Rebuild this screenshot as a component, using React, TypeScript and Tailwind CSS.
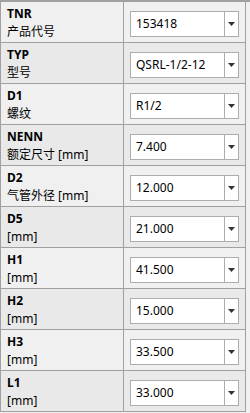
import React from "react";

const rows: { code: string; name: string; value: string }[] = [
  { code: "TNR", name: "产品代号", value: "153418" },
  { code: "TYP", name: "型号", value: "QSRL-1/2-12" },
  { code: "D1", name: "螺纹", value: "R1/2" },
  { code: "NENN", name: "额定尺寸 [mm]", value: "7.400" },
  { code: "D2", name: "气管外径 [mm]", value: "12.000" },
  { code: "D5", name: "[mm]", value: "21.000" },
  { code: "H1", name: "[mm]", value: "41.500" },
  { code: "H2", name: "[mm]", value: "15.000" },
  { code: "H3", name: "[mm]", value: "33.500" },
  { code: "L1", name: "[mm]", value: "33.000" },
];

export default function App() {
  return (
    <div
      className="w-[250px] h-[413px] overflow-hidden bg-[#f0f0f0] text-black"
      style={{ fontFamily: '"Noto Sans", "Noto Sans CJK SC", sans-serif' }}
    >
      <div className="border-t-2 border-[#a0a0a0]">
        <div className="w-[246px] border-l border-r border-[#a0a0a0]">
          {rows.map((r, i) => (
            <div
              key={r.code}
              className={`flex h-[41px] border-b border-[#a0a0a0] ${
                i % 2 === 0 ? "bg-[#f0f0f0]" : "bg-[#e9e9e9]"
              }`}
            >
              <div className="w-[123px] border-r border-[#a0a0a0] pl-[6px] pt-[3px] text-[12px] leading-[18px]">
                <div className="font-bold">{r.code}</div>
                <div className="whitespace-nowrap">{r.name}</div>
              </div>
              <div className="flex-1 pl-[6px] pt-[9px]">
                <div className="flex h-[26px] w-[109px] border border-[#adadad] bg-white">
                  <div className="flex-1 flex items-center pl-[5px] text-[12px] leading-none whitespace-nowrap">
                    {r.value}
                  </div>
                  <div className="w-[14px] border-l border-[#adadad] flex items-center justify-center">
                    <svg width="7" height="4" viewBox="0 0 7 4">
                      <polygon points="0,0 7,0 3.5,4" fill="#333" />
                    </svg>
                  </div>
                </div>
              </div>
            </div>
          ))}
        </div>
      </div>
    </div>
  );
}
